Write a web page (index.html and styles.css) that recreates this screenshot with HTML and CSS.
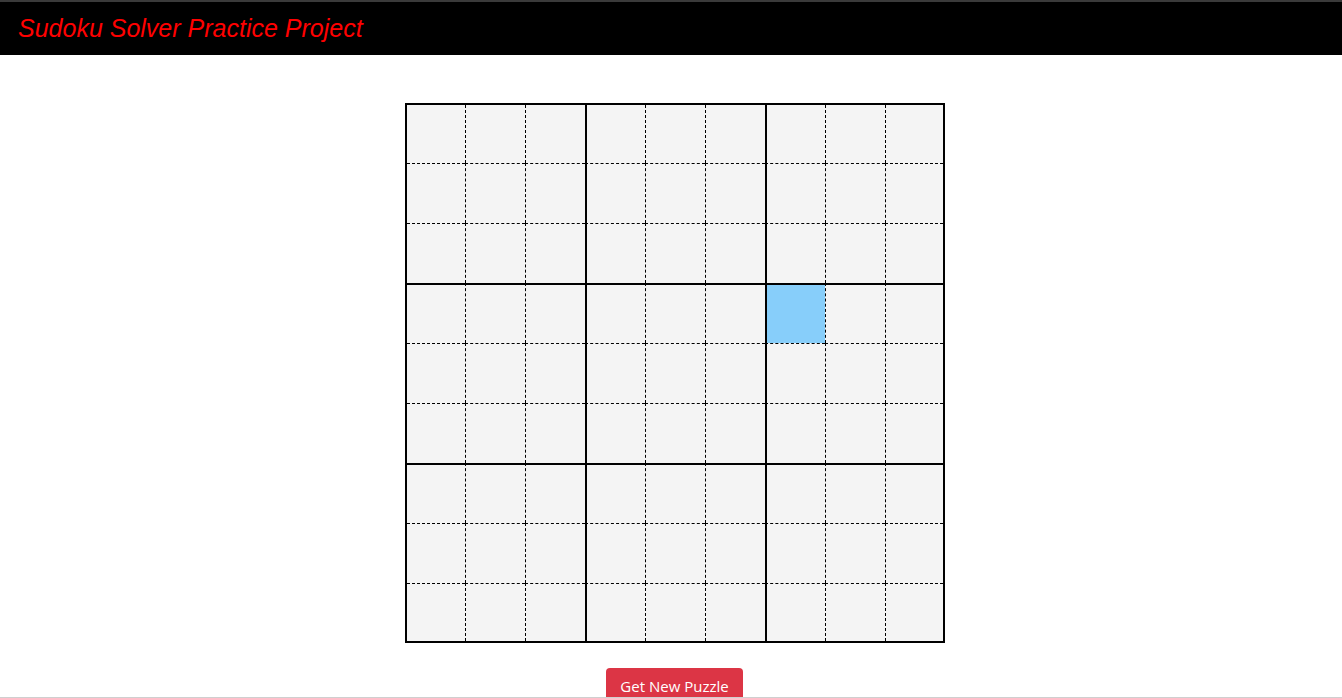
FILE: index.html
```html
<!DOCTYPE html>
<html lang="en">
<head>
<meta charset="utf-8">
<title>Sudoku Solver Practice Project</title>
<link rel="stylesheet" href="styles.css">
</head>
<body>
<header class="topbar">
  <h1 class="title">Sudoku Solver Practice Project</h1>
</header>
<main class="content">
  <div class="board" id="board"></div>
  <button class="btn-new">Get New Puzzle</button>
</main>
<script>
  var board = document.getElementById('board');
  for (var r = 0; r < 9; r++) {
    for (var c = 0; c < 9; c++) {
      var d = document.createElement('div');
      var cls = 'cell';
      if (c > 0) cls += (c % 3 === 0) ? ' bl-thick' : ' bl-dash';
      if (r > 0) cls += (r % 3 === 0) ? ' bt-thick' : ' bt-dash';
      if (r === 3 && c === 6) cls += ' selected';
      d.className = cls;
      board.appendChild(d);
    }
  }
</script>
</body>
</html>
```
FILE: styles.css
```css
* { box-sizing: border-box; }
html, body { margin: 0; padding: 0; }
body {
  background: #fff;
  font-family: "Liberation Sans", Arial, sans-serif;
  height: 698px;
  overflow: hidden;
  border-bottom: 1px solid #cfcfcf;
}
.topbar {
  background: #000;
  border-top: 2px solid #3a3a3a;
  height: 55px;
  display: flex;
  align-items: center;
  padding-left: 18px;
}
.title {
  margin: 0;
  color: #ff0000;
  font-family: "Liberation Sans", Arial, sans-serif;
  font-style: italic;
  font-weight: normal;
  font-size: 25px;
  position: relative;
  top: 0;
}
.content {
  display: flex;
  flex-direction: column;
  align-items: center;
  padding-left: 8px;
  padding-top: 48px;
}
.board {
  width: 540px;
  height: 540px;
  border: 2px solid #000;
  background: #f4f4f4;
  display: grid;
  grid-template-columns: 58px repeat(7, 60px) 58px;
  grid-template-rows: 58px repeat(7, 60px) 58px;
}
.cell { background: #f4f4f4; }
.bl-dash { border-left: 1px dashed #000; }
.bt-dash { border-top: 1px dashed #000; }
.bl-thick { border-left: 2px solid #000; }
.bt-thick { border-top: 2px solid #000; }
.cell.selected { background: #87cefa; }
.btn-new {
  margin-top: 25px;
  margin-right: 1px;
  background: #dc3545;
  color: #fff;
  border: none;
  border-radius: 4px;
  font-family: "Open Sans", "Noto Sans", sans-serif;
  font-size: 15px;
  padding: 8px 13px;
  width: 137px;
  cursor: pointer;
}
```
